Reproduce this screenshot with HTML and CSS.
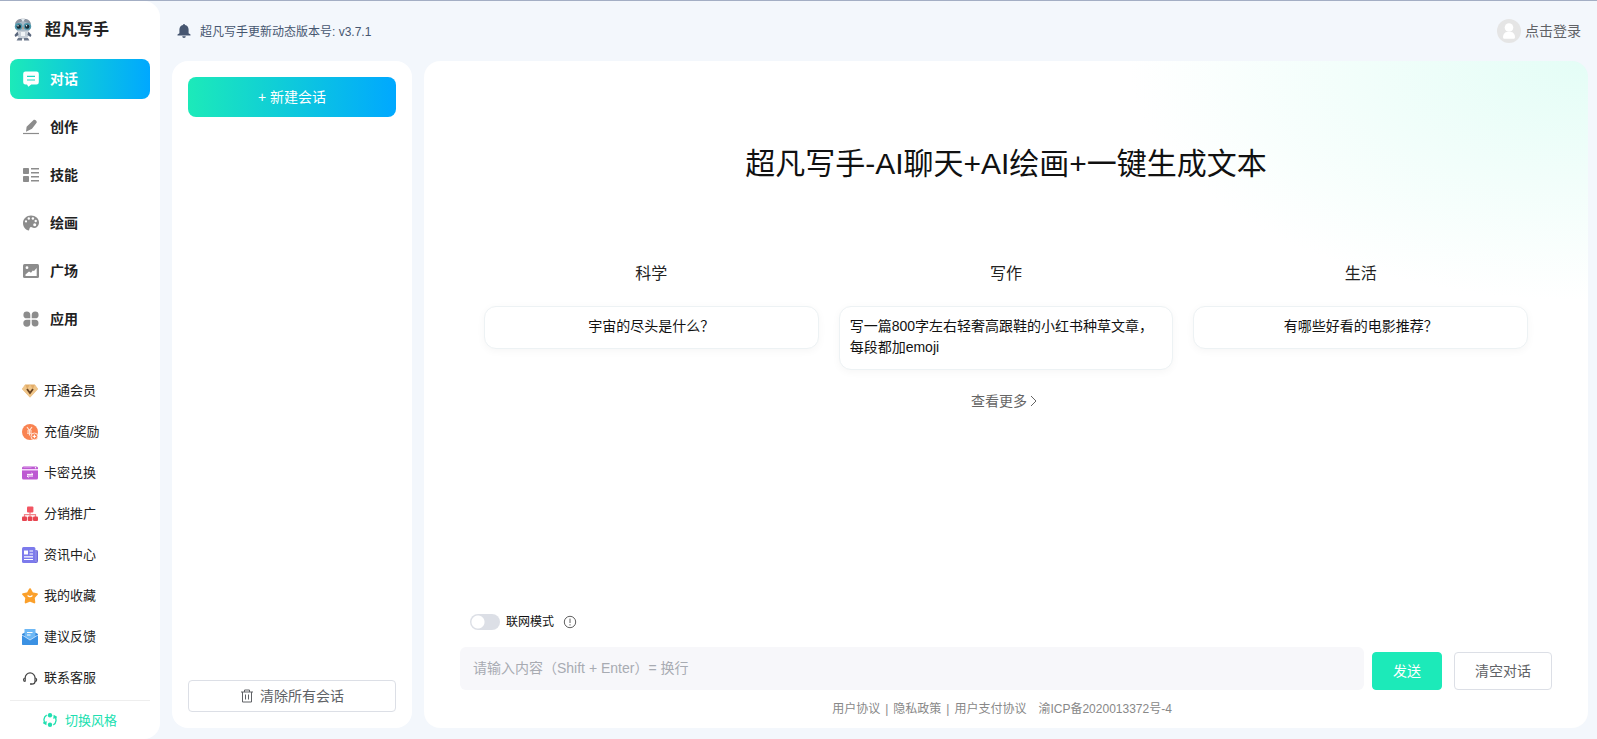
FILE: index.html
```html
<!DOCTYPE html>
<html lang="zh-CN">
<head>
<meta charset="utf-8">
<title>超凡写手</title>
<link rel="stylesheet" href="styles.css">
</head>
<body>
<div class="app">
  <aside class="sidebar">
    <div class="brand">
      <svg class="brand-logo" width="20" height="24" viewBox="0 0 20 24" aria-hidden="true">
        <ellipse cx="10" cy="8" rx="8" ry="7" fill="#a9b9c6"/>
        <path d="M2 6C3 2 6 .8 10 .8S17 2 18 6l-3-1-5-2-5 2z" fill="#8d96a3"/>
        <path d="M8 1l2 3 2-3z" fill="#e3ebf0"/>
        <ellipse cx="5.6" cy="8.4" rx="3.8" ry="3.4" fill="#4f97ac"/>
        <ellipse cx="14.4" cy="8.4" rx="3.8" ry="3.4" fill="#4f97ac"/>
        <circle cx="5.8" cy="8.6" r="2.2" fill="#182c38"/>
        <circle cx="14.2" cy="8.6" r="2.2" fill="#182c38"/>
        <circle cx="5" cy="7.8" r=".7" fill="#fff"/>
        <circle cx="13.5" cy="7.8" r=".7" fill="#fff"/>
        <path d="M9 9.5h2l-1 2z" fill="#c88b62"/>
        <path d="M5.5 13h9l1 5-2 3h-7l-2-3z" fill="#c6ced7"/>
        <path d="M8 14h4v4H8z" fill="#f0f4f7"/>
        <path d="M4.6 13.6 1.5 17l1 2 3-2zM15.4 13.6l3.1 3.4-1 2-3-2z" fill="#59667c"/>
        <path d="M5 20h4v2.600H3.600zM11 20h4l1.400 2.600H11z" fill="#6d798c"/>
      </svg>
      <span class="brand-name">超凡写手</span>
    </div>
    <nav class="nav">
      <a class="nav-item nav-active" href="#"><svg width="16" height="16" viewBox="0 0 16 16"><path d="M2.500.5h11a2.300 2.300 0 0 1 2.300 2.300v8.400a2.300 2.300 0 0 1-2.300 2.300H8.200L5.400 15.800 4 13.500H2.500A2.300 2.300 0 0 1 .2 11.200V2.800A2.300 2.300 0 0 1 2.500.5z" fill="#fff"/><path d="M4 5.400h8M4 9h8" stroke="#1cd9c4" stroke-width="1.200"/></svg><span>对话</span></a>
      <a class="nav-item" href="#"><svg width="16" height="16" viewBox="0 0 16 16"><path d="M10.300 1.200c1.300-1.400 4.200.6 3.300 2.500L9 9.800 3 12.800l.6-5z" fill="#8c8c8c"/><path d="M0 14.500h16" stroke="#8c8c8c" stroke-width="1.200"/></svg><span>创作</span></a>
      <a class="nav-item" href="#"><svg width="16" height="16" viewBox="0 0 16 16" fill="#8c8c8c"><rect y="1" width="6" height="6" rx=".8"/><rect y="9" width="6" height="6" rx=".8"/><path d="M8 1h8v1.500H8zM8 5h8v1.500H8zM8 9h8v1.500H8zM8 13h8v1.500H8z"/></svg><span>技能</span></a>
      <a class="nav-item" href="#"><svg width="16" height="16" viewBox="0 0 16 16"><path d="M8 .5c4.500 0 8 3 8 7 0 3.500-2.500 5.500-5 5.500-1.500 0-1.800-1-3-1-1 0-1.500 1-2 3.500C2.500 15 0 12 0 8 0 3.800 3.500.5 8 .5z" fill="#8c8c8c"/><g fill="#fff"><circle cx="3" cy="6.400" r="1.100"/><circle cx="5.800" cy="3.500" r="1.200"/><circle cx="9.900" cy="3.500" r="1.200"/><circle cx="12.700" cy="6" r="1.200"/><circle cx="11.700" cy="9.800" r="1.500"/></g></svg><span>绘画</span></a>
      <a class="nav-item" href="#"><svg width="16" height="16" viewBox="0 0 16 16"><rect y="1" width="16" height="14" rx="1.500" fill="#8c8c8c"/><circle cx="4" cy="4.700" r="1.400" fill="#fff"/><path d="M2.500 13v-1.500L6 8.500l2 1.300 1.800-2.300 1.200.5L13.700 5v8z" fill="#fff"/></svg><span>广场</span></a>
      <a class="nav-item" href="#"><svg width="16" height="16" viewBox="0 0 16 16" fill="#8c8c8c"><path d="M3.800.5a3.500 3.500 0 0 1 3.500 3.500v3.300H3.800a3.400 3.400 0 0 1 0-6.800zM12.200.5a3.400 3.400 0 0 1 0 6.800H8.700V4A3.500 3.500 0 0 1 12.200.5zM3.800 8.700h3.500V12a3.500 3.500 0 1 1-3.500-3.300zM8.700 8.700h3.500A3.400 3.400 0 1 1 8.700 12z"/></svg><span>应用</span></a>
    </nav>
    <nav class="links">
      <a class="link-item" href="#"><svg width="16" height="16" viewBox="0 0 16 16"><path d="M3.200 1.500h9.600L16 6l-8 8.500L0 6z" fill="#e3ad68"/><path d="M3.200 1.500 5 6l3-4.500L11 6l1.800-4.500L16 6l-8 8.500L0 6z" fill="#f4cf97" opacity=".7"/><path d="M5 6l3 4 3-4" fill="none" stroke="#654020" stroke-width="1.800"/></svg><span>开通会员</span></a>
      <a class="link-item" href="#"><svg width="16" height="16" viewBox="0 0 16 16"><circle cx="8" cy="8" r="8" fill="#f98351"/><path d="M5 3l2.500 3.500L10 3M7.500 6.500v5M5 7h5M5 9.200h5" stroke="#ffe6d7" stroke-width="1.200" fill="none"/><circle cx="12.400" cy="12.400" r="3.400" fill="#f98351" stroke="#ffe6d7"/><path d="M12.400 10.600v3.600M10.600 12.400h3.600" stroke="#fff"/></svg><span>充值/奖励</span></a>
      <a class="link-item" href="#"><svg width="16" height="16" viewBox="0 0 16 16"><rect y="1.500" width="16" height="13" rx="1.500" fill="#bd59d2"/><path d="M0 4h16v1.500H0z" fill="#f4d9fa"/><path d="M1.500 2.300h8" stroke="#d58be5"/><circle cx="13.500" cy="2.700" r=".7" fill="#fff"/><path d="M5 9.400h6L9.400 8M11 11H5l1.600 1.400" stroke="#fff" fill="none"/></svg><span>卡密兑换</span></a>
      <a class="link-item" href="#"><svg width="16" height="16" viewBox="0 0 16 16"><path d="M8 6v5M2.500 11V8.700h11V11" stroke="#f1858b" stroke-width="1.200" fill="none"/><rect x="5" y=".5" width="6.400" height="6" rx="1" fill="#f25562"/><rect y="10.500" width="5" height="4.500" rx="1" fill="#e74551"/><rect x="5.700" y="10.500" width="4.800" height="4.500" rx="1" fill="#e74551"/><rect x="11" y="10.500" width="5" height="4.500" rx="1" fill="#e74551"/></svg><span>分销推广</span></a>
      <a class="link-item" href="#"><svg width="16" height="16" viewBox="0 0 16 16"><path d="M12 3h2.500A1.500 1.500 0 0 1 16 4.500V14a2 2 0 0 1-2 2h-3z" fill="#6d69da"/><rect width="13.400" height="16" rx="1.500" fill="#7c7aec"/><path d="M14 3v12" stroke="#c9c8fa" stroke-width=".6"/><path d="M2 3.500h4v4H2z" fill="#fff"/><path d="M7.500 4H11M7.500 7H11M2 9.800h9M2 12.500h9" stroke="#fff" stroke-width="1.200"/></svg><span>资讯中心</span></a>
      <a class="link-item" href="#"><svg width="16" height="16" viewBox="0 0 16 16"><path d="M8 1.200l2.200 4.100 4.700.9-3.200 3.500.6 4.700L8 12.500l-4.300 1.900.6-4.700L1.100 6.200l4.700-.9z" fill="#fba02b" stroke="#fba02b" stroke-width="2" stroke-linejoin="round"/><path d="M5.600 7.500Q8 9.600 10.400 7.500" stroke="#fff" fill="none" stroke-width="1.200"/></svg><span>我的收藏</span></a>
      <a class="link-item" href="#"><svg width="16" height="16" viewBox="0 0 16 16"><path d="M0 5l3-1.500h10L16 5v9.500a1.500 1.500 0 0 1-1.500 1.500h-13A1.500 1.500 0 0 1 0 14.500z" fill="#2e83d7"/><path d="M2.500 0h11v8L8 11 2.500 8z" fill="#6eb8f5"/><path d="M5 3.500h5.500M5 6h3.500" stroke="#fff" stroke-width="1.200"/><path d="M0 6l8 5 8-5v8.500a1.500 1.500 0 0 1-1.500 1.500h-13A1.500 1.500 0 0 1 0 14.500z" fill="#3b91e3"/><path d="M0 6l8 5 8-5" stroke="#d7ecff" stroke-width=".8" fill="none"/></svg><span>建议反馈</span></a>
      <a class="link-item" href="#"><svg width="16" height="16" viewBox="0 0 16 16" fill="none" stroke="#454545" stroke-width="1.200"><path d="M3.200 11.500V7.800a4.900 4.900 0 0 1 9.800 0v3.700c0 1.800-1.200 2.700-3.200 2.700"/><path d="M3.200 8C1 8.200 1 11.300 3.200 11.500M13 8c2.200.2 2.200 3.300 0 3.500"/><path d="M8 14h2" stroke-width="1.600"/></svg><span>联系客服</span></a>
    </nav>
    <div class="theme">
      <button class="theme-btn" type="button"><svg width="14" height="14" viewBox="0 0 14 14"><circle cx="7" cy="2.200" r="2.200" fill="#20dfb0"/><circle cx="7" cy="11.800" r="2.200" fill="#20dfb0"/><g fill="none" stroke="#20dfb0" stroke-width="1.300"><path d="M3.700 2.200C.2 4 .3 8.500 2.600 11M.2 9.600l2.600 1.600.3-3"/><path d="M10.300 11.800C13.800 10 13.700 5.500 11.400 3M13.800 4.400l-2.600-1.600-.3 3"/></g></svg><span>切换风格</span></button>
    </div>
  </aside>

  <div class="page">
    <header class="topbar">
      <div class="notice"><svg width="14" height="14" viewBox="0 0 14 14" fill="#465670"><path d="M7 0a1 1 0 0 1 1 1c2.200.5 3.600 2.300 3.600 4.600v3.600l1.900 1.400v.8H.5v-.8l1.900-1.400V5.600C2.400 3.300 3.800 1.500 6 1a1 1 0 0 1 1-1zM5.200 12.200h3.600a1.800 1.800 0 0 1-3.600 0z"/></svg><span>超凡写手更新动态版本号: v3.7.1</span></div>
      <a class="login" href="#"><svg width="24" height="24" viewBox="0 0 24 24"><circle cx="12" cy="12" r="12" fill="#e5e5e5"/><circle cx="12" cy="8.500" r="4.300" fill="#fff"/><path d="M6 18c0-3 2-5 4-5h4c2 0 4 2 4 5 0 1.300-.6 1.800-1.800 1.800H7.800C6.600 19.800 6 19.300 6 18z" fill="#fff"/></svg><span>点击登录</span></a>
    </header>

    <div class="panels">
      <section class="sessions">
        <button class="new-btn" type="button">+ 新建会话</button>
        <button class="clear-all" type="button"><svg width="14" height="14" viewBox="0 0 14 14" fill="none" stroke="#606266"><path d="M1 3h12M4.500 3V1h5v2M2.500 3v10h9V3M5.500 5.500v5M8.500 5.500v5"/></svg><span>清除所有会话</span></button>
      </section>

      <main class="chat">
        <h1 class="title">超凡写手-AI聊天+AI绘画+一键生成文本</h1>
        <div class="topics">
          <section class="topic"><h2 class="topic-name">科学</h2><button class="card" type="button">宇宙的尽头是什么？</button></section>
          <section class="topic"><h2 class="topic-name">写作</h2><button class="card" type="button">写一篇800字左右轻奢高跟鞋的小红书种草文章，每段都加emoji</button></section>
          <section class="topic"><h2 class="topic-name">生活</h2><button class="card" type="button">有哪些好看的电影推荐？</button></section>
        </div>
        <a class="more" href="#"><span>查看更多</span><svg width="10" height="12" viewBox="0 0 10 12" fill="none" stroke="#666"><path d="M2 1l5 5-5 5"/></svg></a>

        <div class="composer">
          <div class="mode">
            <input class="switch" type="checkbox" id="online">
            <label for="online">联网模式</label>
            <svg class="info" width="14" height="14" viewBox="0 0 14 14"><circle cx="7" cy="7" r="5.700" fill="none" stroke="#606060"/><path d="M7 3.600v4.400M7 9.200v1.300" stroke="#606060"/></svg>
          </div>
          <form class="entry">
            <input class="prompt" type="text" aria-label="请输入内容" placeholder="请输入内容（Shift + Enter）= 换行">
            <button class="send" type="button">发送</button>
            <button class="reset" type="button">清空对话</button>
          </form>
        </div>
        <footer class="legal"><a href="#">用户协议</a><i>|</i><a href="#">隐私政策</a><i>|</i><a href="#">用户支付协议</a><a class="icp" href="#">渝ICP备2020013372号-4</a></footer>
      </main>
    </div>
  </div>
</div>
</body>
</html>
```
FILE: styles.css
```css
* { box-sizing: border-box; }
body {
  margin: 0;
  background: #f3f7fc;
  color: #222;
  font-family: "Liberation Sans", "Noto Sans CJK SC", sans-serif;
  font-size: 14px;
}
a { color: inherit; text-decoration: none; }
button, input { font: inherit; }
button { cursor: pointer; }
svg { display: block; flex: none; }

.app { display: flex; min-height: 100vh; border-top: 1px solid #a3aec4; }

.sidebar {
  display: flex;
  flex-direction: column;
  flex: 0 0 160px;
  padding: 0 10px;
  background: #fff;
  border-radius: 0 16px 16px 0;
}
.brand { display: flex; align-items: center; gap: 12px; height: 58px; padding-left: 3px; }
.brand-name { padding-bottom: 4px; font-size: 16px; font-weight: 600; }

.nav { display: flex; flex-direction: column; gap: 8px; }
.nav-item {
  display: flex;
  align-items: center;
  gap: 11px;
  height: 40px;
  padding-left: 13px;
  border-radius: 8px;
  font-weight: 600;
}
.nav-active { color: #fff; }
.nav-active, .new-btn { background: linear-gradient(90deg, #1ceab9, #00a8ff); }
.nav-item span, .link-item span, .theme-btn span, .notice span, .login span, .clear-all span { padding-bottom: 2px; }

.links { display: flex; flex-direction: column; margin-top: 31px; padding-bottom: 2px; }
.link-item { display: flex; align-items: center; gap: 6px; height: 41px; padding-left: 12px; font-size: 13px; }

.theme { display: flex; flex: 1; justify-content: center; border-top: 1px solid #eee; }
.theme-btn {
  display: flex;
  align-items: center;
  gap: 8px;
  padding: 0;
  border: 0;
  background: none;
  color: #20dfb0;
  font-size: 13px;
}

.page { display: flex; flex: 1; flex-direction: column; min-width: 0; padding: 0 9px 11px 12px; }
.topbar { display: flex; align-items: center; justify-content: space-between; height: 60px; padding: 0 7px 0 5px; }
.notice { display: flex; align-items: center; gap: 9px; color: #465670; font-size: 12px; }
.login { display: flex; align-items: center; gap: 4px; color: #606266; }

.panels { display: flex; flex: 1; gap: 12px; }
.sessions {
  display: flex;
  flex: 0 0 240px;
  flex-direction: column;
  justify-content: space-between;
  padding: 16px;
  border-radius: 16px;
  background: #fff;
}
.new-btn { height: 40px; padding: 0 0 2px; border: 0; border-radius: 8px; color: #fff; }
.clear-all {
  display: flex;
  align-items: center;
  justify-content: center;
  gap: 6px;
  height: 32px;
  border: 1px solid #dcdfe6;
  border-radius: 4px;
  background: #fff;
  color: #606266;
}

.chat {
  display: flex;
  flex: 1;
  flex-direction: column;
  min-width: 0;
  padding: 81px 36px 10px;
  border-radius: 16px;
  background: radial-gradient(ellipse 460px 240px at 100% 0, #e4fdf6, #fff) #fff;
}
.title { margin: 0; color: #111; font-size: 30px; font-weight: 400; line-height: 44px; text-align: center; }
.topics { display: grid; grid-template-columns: repeat(3, 1fr); align-items: start; gap: 20px; margin-top: 76px; padding: 0 24px; }
.topic { display: flex; flex-direction: column; gap: 20px; }
.topic-name { margin: 0; font-size: 16px; font-weight: 400; line-height: 24px; text-align: center; }
.card {
  display: flex;
  justify-content: center;
  padding: 9px 10px 11px;
  border: 1px solid #edf2f4;
  border-radius: 12px;
  background: #fff;
  box-shadow: 0 2px 8px rgba(0, 0, 0, .04);
  color: #111;
  line-height: 21px;
  text-align: left;
}
.more { display: flex; align-items: center; align-self: center; gap: 2px; margin-top: 21px; padding-right: 2px; color: #666; line-height: 20px; }

.composer { margin-top: auto; }
.mode { display: flex; align-items: center; gap: 6px; padding-left: 10px; color: #111; font-size: 12px; line-height: 18px; }
.switch {
  appearance: none;
  width: 30px;
  height: 16px;
  margin: 0;
  border-radius: 8px;
  background: radial-gradient(circle at 8px 8px, #fff 6px, #dcdfe6 7px);
}
.info { margin-left: 3px; }
.entry { display: flex; align-items: flex-end; gap: 12px; margin: 16px 0 0; }
.prompt {
  flex: 1;
  min-width: 0;
  height: 43px;
  margin-right: -4px;
  padding: 0 13px 2px;
  border: 0;
  border-radius: 6px;
  background: #f7f7fa;
}
.prompt::placeholder { color: #a8abb2; }
.send, .reset { height: 38px; padding: 0 20px 2px; border: 1px solid #dcdfe6; border-radius: 4px; background: #fff; color: #606266; }
.send { border-color: #1ceab9; background: #1ceab9; color: #fff; }
.legal { display: flex; justify-content: center; margin-top: 10px; padding-right: 8px; color: #888; font-size: 12px; line-height: 18px; }
.legal i { margin: 0 5px; font-style: normal; }
.icp { margin-left: 12px; }
```
